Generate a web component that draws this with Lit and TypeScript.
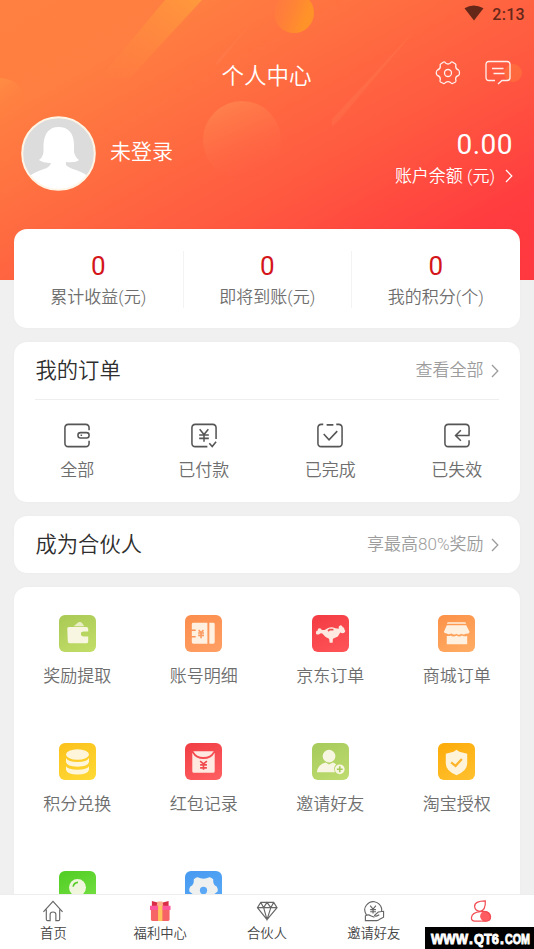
import { LitElement, html, svg, css, nothing } from "lit";
import { customElement, property } from "lit/decorators.js";

const wallet = svg`<path d="M27 8V5.500Q27 2 23.500 2H5.500Q2 2 2 5.500V21.500Q2 25 5.500 25H23.500Q27 25 27 21.500V19"/><rect x="15.500" y="10.500" width="11.500" height="5.500" rx="2.600"/><path d="M19 12.500v1.500"/>`;
const paid = svg`<path d="M27 17V5.500Q27 2 23.500 2H5.500Q2 2 2 5.500V21.500Q2 25 5.500 25H18M20 21.500l3 3.500 4-5M10 7l4.500 5.500L19 7M14.500 12.500V20M9.500 13h10M9.500 16.500h10"/>`;
const done = svg`<path d="M7.500 2H5.500Q2 2 2 5.500V21.500Q2 25 5.500 25H23.500Q27 25 27 21.500V5.500Q27 2 23.500 2H21M11 2.500h7M8 12l5.500 6L22 9"/>`;
const expired = svg`<path d="M27 13.500V5.500Q27 2 23.500 2H5.500Q2 2 2 5.500V21.500Q2 25 5.500 25H23.500Q27 25 27 21.500V18.500M27.500 13.500H13M18.500 8L13 13.500 18.500 19"/>`;

const services = [
  { label: "奖励提取", from: "#a9c955", to: "#c2df68", art: svg`<path d="M15 11.500l5-4q2-1 3.500.5l2.500 3.500z" opacity=".8"/><path d="M8.500 14.500q-.5-2 1.500-2.300h18q2 0 2 1.800V17h-4.500q-3 0-3 2.500t3 2.500H30v5.500q0 1.500-1.500 1.500H11Q9 29 9 27z"/>` },
  { label: "账号明细", from: "#fb8d4c", to: "#ff9f65", art: svg`<path d="M8.500 8q-1.500 0-1.500 1.500V15h4v1.500H7v5h4V23H7v5q0 1.500 1.500 1.500H23V8zM25 8h4q1.500 0 1.500 1.500V28q0 1.500-1.500 1.500H25z"/><path class="cut orange" d="M14 15.500l2.500 2.500 2.500-2.500M16.500 17v7M13.500 18.500h6M13.500 21h6"/>` },
  { label: "京东订单", from: "#f33b43", to: "#ff5558", art: svg`<path d="M4 18.500q0-2.500 2-2.500-.5-2.500 1.800-2.500 2 0 2.200 2h3l3-1.800q4-2 8 0l3.500.3q-.5-3 2-3.500 2 .2 2 2.200 2 0 1.800 2.300 1.700 1.500.2 3-2 1.500-4.500 0l-2.500 4-5 2.500-.3 4h-3l-.7-4-3.500-2-3.500-3.500q-2-.5-3 .7-3.500 1.300-3.500-1.200z"/><path class="cut red" d="M16.500 16.500l1.500-1.500h4"/>` },
  { label: "商城订单", from: "#fc9148", to: "#ffad65", art: svg`<path d="M10 7.500h18l1 1.500H9zM9 10.500h20l3.500 7q-1 2.500-3.500 1.500-3 2-5 .2-3 2-5 0-3 2-5-.2-3.500 1.500-5 0-2.500 0-3-1.500zM9 21.500q3 .5 4-.5 3 2 6 0 3 2 5.500 0 3 1.500 5.500.5V30H9z"/>` },
  { label: "积分兑换", from: "#fcc11b", to: "#ffda35", art: svg`<ellipse cx="19" cy="11.800" rx="11.800" ry="5.300"/><path d="M7.200 15.500q2 4 11.800 4t11.800-4v4q-1 4.800-11.800 4.800T7.200 19.500zM7.200 24q2 3.500 11.800 3.500t11.800-3.500v3.500q-1 4.800-11.800 4.800T7.200 27.500z"/>` },
  { label: "红包记录", from: "#f03d43", to: "#ff6063", art: svg`<path d="M7.500 10q3.500 6.500 11.500 6.500T30.500 10V29q0 1.500-1 1.500h-21q-1 0-1-1.500z"/><path d="M8.500 8.500h21q-3.500 6-10.500 6t-10.500-6z"/><path class="cut red" d="M15.500 18.500l3.500 3 3.500-3M19 21.500v6M15.500 22.500h7M15.500 25.500h7"/>` },
  { label: "邀请好友", from: "#a6ca5c", to: "#bfdc6f", art: svg`<circle cx="17.500" cy="13.500" r="6.500"/><path d="M5 30q1-8 9-10l3.500 2 4-2q2 .7 3.300 2-3.500 3-1.200 8z"/><circle cx="28.500" cy="27" r="5"/><path class="cut green" d="M25.500 27h6M28.500 24v6"/>` },
  { label: "淘宝授权", from: "#fdab08", to: "#ffc12f", art: svg`<path d="M19 7l3 2 8 2v10q0 7.500-11 12Q8 28.500 8 21V11l8-2z"/><path class="cut amber" d="M13.500 20l4.500 3.500 6.500-7"/>` },
  { label: "", from: "#50cd22", to: "#7be34a", art: svg`<circle cx="19" cy="17" r="8.700"/><path class="cut lime" d="M14.500 16q1-4 5-4.300"/>` },
  { label: "", from: "#469af0", to: "#5eacf8", art: svg`<path d="M13 6.500q6 3 12 0 1-.5 4 2-.5 6 3.500 7.500 1.500 2 1 5l-5 4v8H9.500v-8l-5-4q-.5-3 1-5 4-1.500 3.500-7.500 3-2.500 4-2z"/><circle class="hole" cx="19" cy="20" r="3.700"/>` },
];

const nav = [
  { label: "首页", art: svg`<path d="M1.500 12.500L11.500 1.500 21.500 12.500M4.500 10V20Q4.500 21.500 6 21.500H8.500V15Q8.500 12.500 11.500 12.500T14.500 15V21.500H17Q18.500 21.500 18.500 20V10"/>` },
  { label: "福利中心", art: svg`<g stroke="none"><path fill="#d92d47" d="M3 1l7 2v4H3zM20.500 1l-7 2v4h7z"/><path fill="#f66465" d="M2 9H21.500V20.500Q21.500 22 20 22H3.500Q2 22 2 20.500z"/><path fill="#ff579b" d="M1 6h21.500v4.500H1z"/><path fill="#ffc45c" d="M9.500 6h4.500V22H9.500z"/><path fill="#ffb08a" d="M9 1.500h5l1 4.500H8z"/></g>` },
  { label: "合伙人", art: svg`<path d="M5 2.500H18.500L22 8 11.500 20.500 1.500 8zM1.500 8H22M5 2.500L8 8l3.500-5.500L15.500 8l3-5.500M8 8l3.500 12.500L15.500 8"/>` },
  { label: "邀请好友", art: svg`<path d="M3.500 15.500Q0 10 3.500 5.500 7 1 12 1.800 18 3 19.500 9V12M7.500 6l3 3.500 3-3.500M10.500 9.500v4.500M7.500 10h6M7.500 12.300h6M2.500 16.500v5h12q1.500 0 3-1.500L21.500 18V11.800L16 12.500l-4 3.500q1 2 5-.5M2.500 16.500q3-2 5.500 0l4 1.500"/>` },
  { label: "", art: svg`<g stroke="#f14c53" stroke-width="1.3"><path d="M16 1Q4.500 1 4.800 7 5.500 11.500 10.500 11.800 16.500 11 16 1z"/><path d="M11 12.200Q2 13 1.500 18.500 1.500 22 5 22H12"/><circle fill="#ff5d62" stroke="none" cx="16.200" cy="17" r="5.600"/><path d="M11 12.200Q20 11 21.500 17.500 21.500 22 17 22H12"/></g>` },
];

const chevron = html`<svg class="chev" viewBox="0 0 8 14"><path d="M1 1l5.800 6L1 13"/></svg>`;

@customElement("service-icon")
class ServiceIcon extends LitElement {
  @property({ attribute: false }) item: any;
  static styles = css`
    :host { display: block; width: 37px; height: 37px; }
    .tile { width: 37px; height: 37px; border-radius: 6px; overflow: hidden; }
    svg { display: block; width: 37px; height: 37px; fill: #fffaf0; fill-opacity: .9; }
    .cut { fill: none; stroke-width: 1.7; }
    .orange { stroke: #fb9c65; } .red { stroke: #f04b4d; } .green { stroke: #a7cb5a; }
    .amber { stroke: #fdb42a; stroke-width: 2.3; } .lime { stroke: #58cd2b; }
    .hole { fill: #5aa8f6; fill-opacity: 1; }
  `;
  render() {
    return html`<div class="tile" style="background:linear-gradient(155deg,${this.item.from},${this.item.to})"><svg viewBox="0 0 38 38">${this.item.art}</svg></div>`;
  }
}

@customElement("app-root")
class AppRoot extends LitElement {
  static styles = css`
    :host { display: block; width: 534px; height: 949px; position: relative; overflow: hidden; background: #f0f0f0; font-family: Roboto, "Noto Sans CJK SC", sans-serif; font-weight: 350; color: #6e6e6e; }
    * { box-sizing: border-box; }
    svg { fill: none; display: block; flex: none; }
    .hero { height: 280px; color: #fff; position: relative; background: linear-gradient(151deg, #ff8040 0%, #ff7e41 20%, #ff5a40 60%, #ff3c3f 85%, #ff383f 100%); }
    .decor { position: absolute; inset: 0; width: 534px; height: 280px; }
    .content { position: relative; }
    .status { height: 29px; display: flex; justify-content: flex-end; align-items: center; gap: 8px; padding-right: 9px; color: #662719; font: 500 16px Roboto, sans-serif; letter-spacing: .3px; }
    .status svg { width: 20px; height: 16px; fill: #662719; margin-top: -3px; }
    .title { height: 88px; display: grid; grid-template-columns: 1fr auto 1fr; align-items: center; font-size: 22.500px; padding: 1px 23px 0 0; }
    .title span { padding-left: 22px; }
    .tools { display: flex; justify-content: flex-end; gap: 24px; stroke: #fff; stroke-opacity: .9; stroke-width: 1.3; margin-top: -1px; }
    .profile { display: flex; height: 75px; align-items: center; padding: 0 21px; margin-top: -1px; }
    .avatar { width: 75px; height: 75px; margin-right: 14px; }
    .name { font-size: 21px; margin-top: -8px; }
    .balance { margin-left: auto; text-align: right; padding-top: 10px; }
    .amount { font-size: 28px; font-weight: 400; line-height: 34px; letter-spacing: .5px; }
    .caption { display: flex; align-items: center; font-size: 17px; line-height: 27px; gap: 10px; margin-top: 1px; }
    .chev { width: 8px; height: 14px; stroke: currentColor; stroke-width: 1.3; }
    .cards { position: relative; margin: -51px 14.500px 0 14px; display: flex; flex-direction: column; gap: 14px; }
    .card { background: #fff; border-radius: 13px; box-shadow: 0 0 3px #00000008; }
    .stats { height: 99px; display: grid; grid-template-columns: repeat(3, 1fr); padding-top: 22px; }
    .stat { height: 57px; text-align: center; font-size: 17px; line-height: 24px; border-left: 1px solid #f3f3f3; }
    .stat:first-child { border: 0; }
    .stat b { display: block; font-size: 26px; line-height: 31px; font-weight: 400; color: #d4151a; margin-bottom: 3px; }
    .orders { height: 160px; padding: 0 21px; }
    .head { height: 58px; display: flex; align-items: center; justify-content: space-between; border-bottom: 1px solid #eee; }
    .head h2 { font-size: 21.300px; font-weight: 350; color: #2e2e2e; margin: 0 0 0 .5px; padding-bottom: 4px; }
    .more { display: flex; align-items: center; gap: 7px; color: #9c9c9c; font-size: 17px; padding-bottom: 4px; }
    .more .chev { margin-top: 4px; }
    .four { display: grid; grid-template-columns: repeat(4, 126.500px); margin: 0 -21px; }
    .order { display: flex; flex-direction: column; align-items: center; font-size: 17px; padding-top: 22px; line-height: 24px; gap: 9px; }
    .order svg { width: 28px; height: 27px; stroke: #555; stroke-width: 1.6; }
    .partner { height: 57px; padding: 0 21px; }
    .partner .head { height: 57px; border: 0; }
    .services { height: 420px; display: grid; grid-template-columns: repeat(4, 126.500px); grid-auto-rows: 128.300px; padding-top: 27.500px; }
    .service { display: flex; flex-direction: column; align-items: center; gap: 12px; font-size: 17px; line-height: 24px; }
    .nav { position: absolute; left: 0; right: 0; bottom: 0; height: 55px; background: #fff; border-top: 1px solid #ededed; display: grid; grid-template-columns: repeat(5, 1fr); }
    .tab { display: flex; flex-direction: column; align-items: center; font-size: 13.300px; font-weight: 350; line-height: 20px; color: #444; padding-top: 4.500px; gap: 2px; }
    .tab svg { width: 22px; height: 22px; stroke: #666; stroke-width: 1.2; }
    .mark { position: absolute; right: 0; bottom: 0; width: 109px; height: 22px; background: #000; }
    .mark svg { width: 109px; height: 22px; }
    .mark text { fill: #fff; stroke: #fff; stroke-width: .9; font: 700 14px "Liberation Sans", sans-serif; }
  `;
  render() {
    return html`
      <div class="hero">
        <svg class="decor" viewBox="0 0 534 280">
          <defs>
            <linearGradient id="beam" x1="1" y1="0" x2="0" y2="1"><stop stop-color="#ff9a3c"/><stop offset="1" stop-color="#ff8540" stop-opacity=".05"/></linearGradient>
            <linearGradient id="orb" x1=".2" y1="0" x2=".6" y2="1"><stop stop-color="#ff8950" stop-opacity=".8"/><stop offset="1" stop-color="#ff5a42" stop-opacity=".3"/></linearGradient>
            <linearGradient id="sun" x1=".8" y1=".6" x2="0" y2=".3"><stop stop-color="#ff9228"/><stop offset="1" stop-color="#ff8a35" stop-opacity=".1"/></linearGradient>
            <linearGradient id="ray" x1="1" y1="0" x2="0" y2="1"><stop stop-color="#ff8955" stop-opacity=".25"/><stop offset="1" stop-color="#ff8460" stop-opacity=".2"/></linearGradient>
            <linearGradient id="left" x1="0" y1="0" x2=".3" y2="1"><stop stop-color="#ff9144" stop-opacity=".8"/><stop offset="1" stop-color="#ff7740" stop-opacity="0"/></linearGradient>
          </defs>
          <path fill="url(#beam)" d="M165 0H202L130 78H100z"/>
          <circle fill="url(#sun)" cx="294" cy="13" r="20"/>
          <circle fill="url(#orb)" cx="242" cy="140" r="39"/>
          <path fill="url(#left)" d="M0 78Q24 79 24 104V134H0z"/>
          <path fill="url(#ray)" d="M415 30L332 119V126L340 119zM252 22L216 62V66L220 62z"/>
          <circle fill="#ff843c" fill-opacity=".4" cx="513" cy="73" r="9"/>
        </svg>
        <div class="content">
          <div class="status"><svg viewBox="0 0 21 16"><path d="M.5 3Q10-3 20.500 3L10.500 16z"/></svg>2:13</div>
          <div class="title"><i></i><span>个人中心</span><div class="tools">
            <svg width="26" height="26" viewBox="0 0 26 26"><path stroke-linejoin="round" d="M8.500 2Q10 1.500 10.500 3 13 5 15.500 3 16 1.500 17.500 2L20.500 4Q21.300 4.700 20.700 6 20.700 9.500 23.500 10 24.500 10.500 24.500 13 24.500 15 23.500 15.500 20.300 16.300 20.700 19.500 21.500 21.500 20.500 22L17.500 23.500Q16.500 24 15.500 22.500 13 20.800 10.500 22.500 9.500 24 8.500 23.500L5.500 22Q4.500 21.300 5.300 19.500 5.500 16.300 2.500 15.500 1.300 15 1.300 13 1.300 10.500 2.500 10 5.500 9.300 5.300 6 4.700 4.500 5.700 4z"/><circle cx="13" cy="13" r="3.500"/></svg>
            <svg width="26" height="26" viewBox="0 0 26 26"><path d="M10 20.500H4Q1 20.500 1 17.500V4.500Q1 1.500 4 1.500H22Q25 1.500 25 4.500V17.500Q25 20.500 22 20.500H17L13 24M7 8.500H18.500M8.500 13.500H19.500"/></svg>
          </div></div>
          <div class="profile">
            <svg class="avatar" viewBox="0 0 75 75"><clipPath id="face"><circle cx="37.500" cy="37.500" r="36"/></clipPath><circle cx="37.500" cy="37.500" r="36.500" fill="#dcdcdc"/><path clip-path="url(#face)" fill="#fff" d="M37.500 11Q52 11 53 28V36Q54 41 58 44 55 47 45 46V49Q48 52 55 54 64 57 69 62L65 75H10L6 62Q13 56 23 53 29 51 30 47 22 47 18 44 22 41 22.500 36V28Q24 11 37.500 11z"/><circle cx="37.500" cy="37.500" r="36.300" stroke="#fff5e6" stroke-width="2"/></svg>
            <div class="name">未登录</div>
            <div class="balance"><div class="amount">0.00</div><div class="caption">账户余额 (元) ${chevron}</div></div>
          </div>
        </div>
      </div>
      <div class="cards">
        <div class="card stats">${["累计收益(元)", "即将到账(元)", "我的积分(个)"].map((s) => html`<div class="stat"><b>0</b>${s}</div>`)}</div>
        <div class="card orders">
          <div class="head"><h2>我的订单</h2><div class="more">查看全部${chevron}</div></div>
          <div class="four">${[["全部", wallet], ["已付款", paid], ["已完成", done], ["已失效", expired]].map(([t, i]) => html`<div class="order"><svg viewBox="0 0 29 27">${i}</svg>${t}</div>`)}</div>
        </div>
        <div class="card partner"><div class="head"><h2>成为合伙人</h2><div class="more">享最高80%奖励${chevron}</div></div></div>
        <div class="card services">${services.map((s) => html`<div class="service"><service-icon .item=${s}></service-icon>${s.label || nothing}</div>`)}</div>
      </div>
      <div class="nav">${nav.map((n) => html`<div class="tab"><svg viewBox="0 0 23 23">${n.art}</svg>${n.label}</div>`)}</div>
      <div class="mark"><svg viewBox="0 0 109 22"><text y="17"><tspan x="6" textLength="37" lengthAdjust="spacingAndGlyphs">WWW</tspan><tspan x="44">.</tspan><tspan x="49" textLength="25" lengthAdjust="spacingAndGlyphs">QT6</tspan><tspan x="75">.</tspan><tspan x="80" textLength="25" lengthAdjust="spacingAndGlyphs">COM</tspan></text></svg></div>
    `;
  }
}
